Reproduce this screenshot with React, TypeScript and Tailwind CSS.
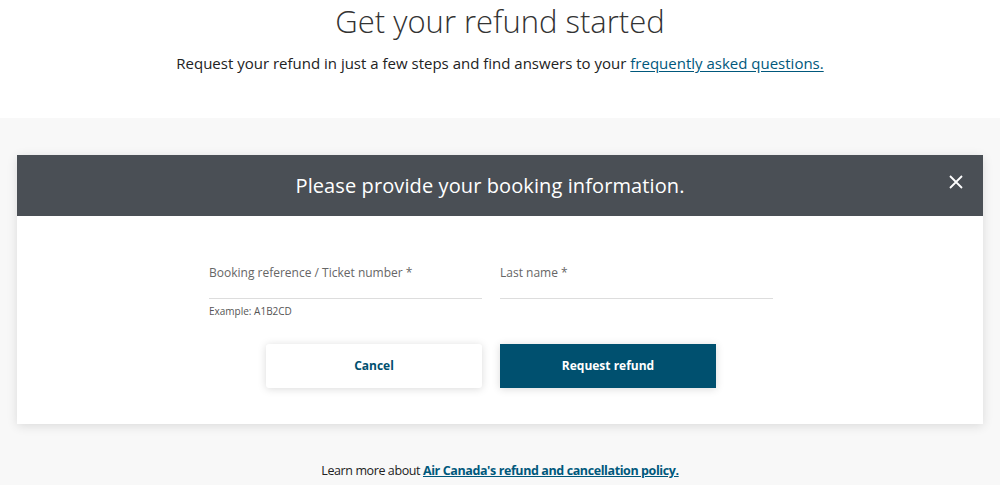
export default function App() {
  return (
    <div className="min-h-[485px] bg-[#f8f8f8] font-['Open_Sans',sans-serif] text-[#222]">
      {/* Intro */}
      <div className="bg-white h-[118px] flex flex-col items-center">
        <h1 className="text-[31px] leading-[40px] font-light text-[#333] mt-[1px]">Get your refund started</h1>
        <p className="text-[15px] leading-[22px] text-[#222] mt-[11px]">
          Request your refund in just a few steps and find answers to your{' '}
          <a className="text-[#00587c] underline underline-offset-2" href="#">frequently asked questions.</a>
        </p>
      </div>

      {/* Card */}
      <div className="px-[17px] pt-[37px]">
        <div className="bg-white shadow-[0_2px_10px_rgba(0,0,0,0.12)]">
          <div className="relative h-[61px] bg-[#4a4f55] flex items-center justify-center pr-[20px]">
            <h2 className="text-[20px] text-white tracking-[0.1px]">Please provide your booking information.</h2>
            <button className="absolute right-[20px] top-[20px] text-white">
              <svg width="14" height="14" viewBox="0 0 14 14" fill="none" stroke="currentColor" strokeWidth="1.8">
                <path d="M1 1L13 13M13 1L1 13" />
              </svg>
            </button>
          </div>

          <div className="pt-[48px] pb-[36px] pr-[18px] flex flex-col items-center">
            <div className="flex gap-[18px]">
              <div className="w-[273px]">
                <label className="block text-[12px] leading-[18px] text-[#666]">Booking reference / Ticket number *</label>
                <div className="mt-[16px] border-b border-[#ddd]" />
                <div className="mt-[5px] text-[10px] leading-[14px] text-[#555]">Example: A1B2CD</div>
              </div>
              <div className="w-[273px]">
                <label className="block text-[12px] leading-[18px] text-[#666]">Last name *</label>
                <div className="mt-[16px] border-b border-[#ddd]" />
              </div>
            </div>

            <div className="flex gap-[18px] mt-[26px]">
              <button className="w-[216px] h-[44px] bg-white rounded-[3px] shadow-[0_1px_8px_rgba(0,0,0,0.15)] text-[12px] font-bold text-[#00506f]">
                Cancel
              </button>
              <button className="w-[216px] h-[44px] bg-[#00506f] shadow-[0_1px_8px_rgba(0,0,0,0.15)] text-[12px] font-bold text-white">
                Request refund
              </button>
            </div>
          </div>
        </div>
      </div>

      {/* Footer */}
      <p className="mt-[38px] text-center text-[12.5px] leading-[18px] tracking-[-0.4px] text-[#222]">
        Learn more about{' '}
        <a className="font-bold text-[#00587c] underline" href="#">Air Canada's refund and cancellation policy.</a>
      </p>
    </div>
  );
}
